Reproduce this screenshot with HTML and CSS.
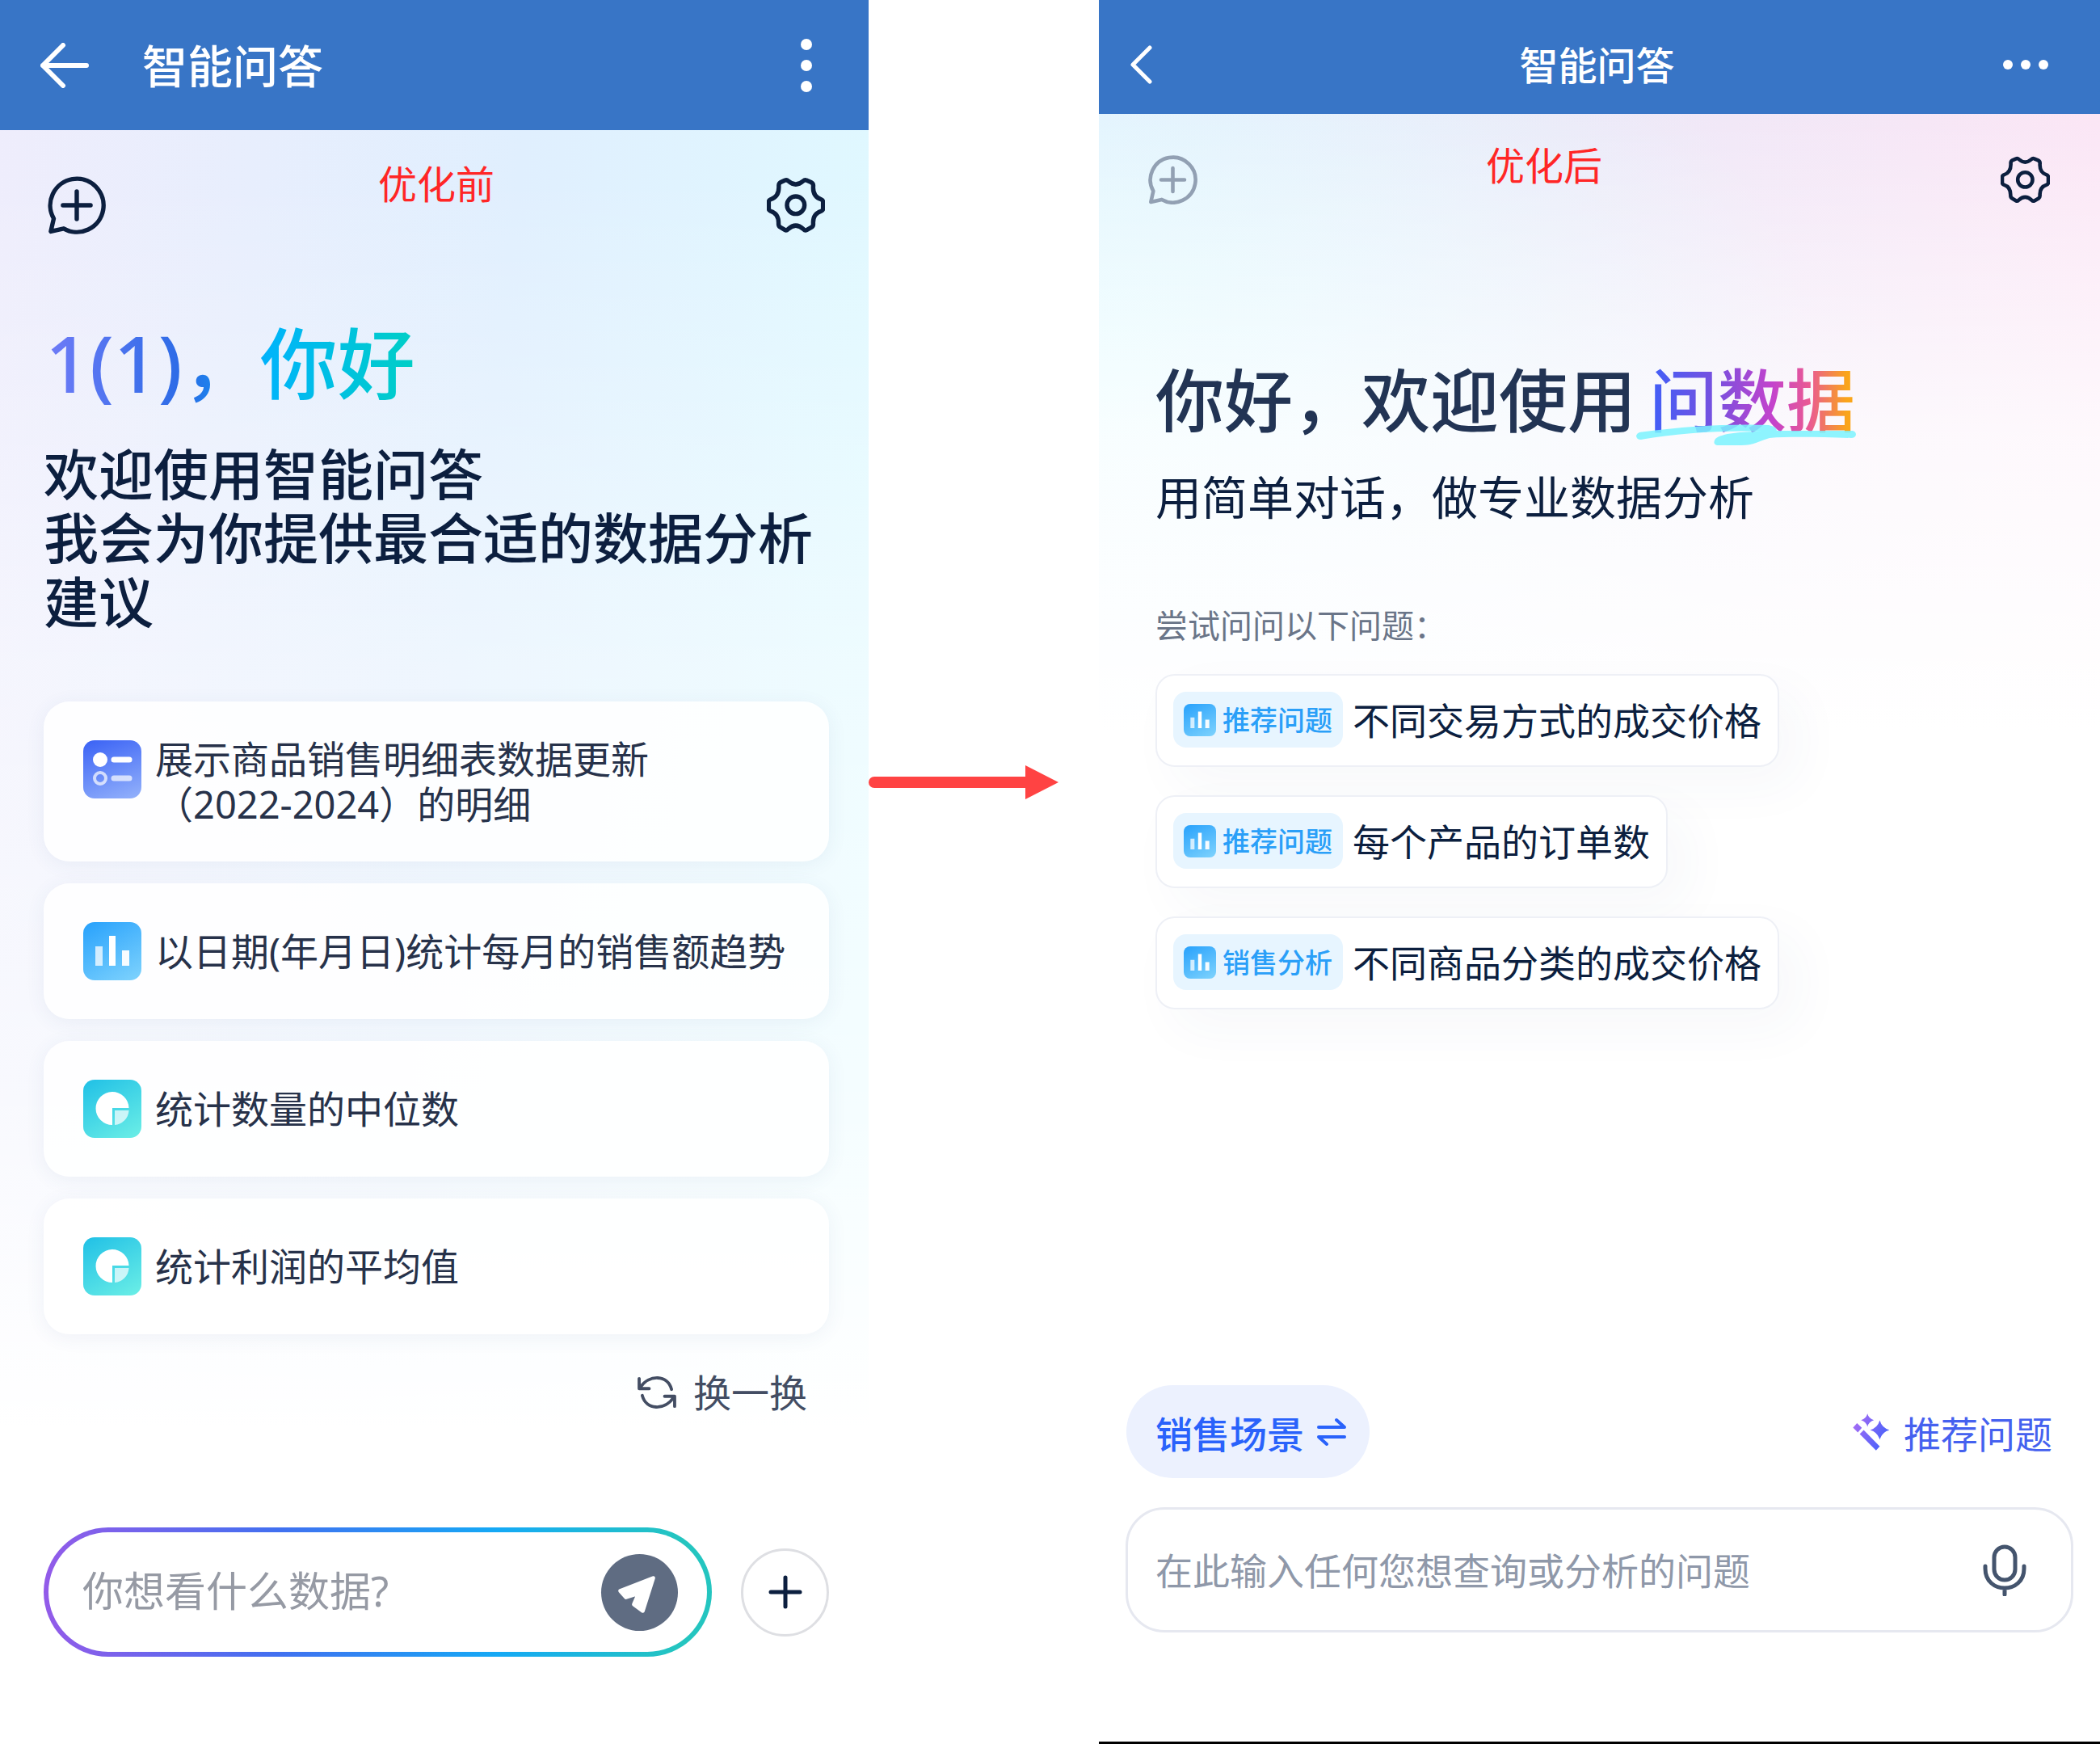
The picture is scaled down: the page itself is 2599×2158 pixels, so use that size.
FILE: index.html
```
<!DOCTYPE html>
<html lang="zh-CN">
<head>
    <meta charset="UTF-8">
    <meta name="viewport" content="width=device-width, initial-scale=1">
    <title>智能问答</title>
    <link rel="stylesheet" href="styles.css">
</head>
<body>
<!-- shared icons -->
<svg class="sprite" aria-hidden="true">
    <symbol id="i-chat" viewBox="0 0 24 24">
        <path d="M1.3 22.8L2.5 17.5A11 11 0 1 1 6.6 21.6Z M12 6.3V17.7M6.3 12H17.7" fill="none" stroke="currentColor" stroke-width="1.8" stroke-linecap="round" stroke-linejoin="round"/>
    </symbol>
    <symbol id="i-gear" viewBox="30 39 213 213">
        <g fill="none" stroke="currentColor" stroke-width="16" stroke-linejoin="round">
            <path d="M74 76Q73 65 81 61L97 54Q103 51 109 57Q136 81 163 57Q169 51 175 54L192 61Q201 65 200 76C198 105 210 118 229 124Q236 127 236 133V158Q236 164 229 167C210 173 198 188 200 214Q200 222 194 226L176 236Q170 239 164 233Q136 207 108 233Q102 239 97 236L80 226Q73 222 73 214C74 188 64 173 44 167Q37 164 37 158V133Q37 127 44 124C64 118 75 105 74 76Z"/>
            <circle cx="136" cy="145" r="32"/>
        </g>
    </symbol>
    <symbol id="i-bars" viewBox="0 0 72 72">
        <path d="M15 30h9v24h-9z" fill="#fff" opacity=".75"/>
        <path d="M32 17h8v37h-8z" fill="#fff"/>
        <path d="M48 35h9v19h-9z" fill="#fff" opacity=".95"/>
    </symbol>
    <symbol id="i-pie" viewBox="0 0 72 72">
        <path d="M36 56A20.500 20.500 0 1 1 56.500 35H36Z" fill="#fff"/>
        <path d="M39 38H56.500A19 19 0 0 1 39 56Z" fill="#fff" opacity=".7"/>
    </symbol>
</svg>

<main class="compare">
    <section class="phone before">
        <header class="bar">
            <button class="icon-btn" aria-label="返回">
                <svg class="back" viewBox="0 0 60 56"><path d="M28 3L3 28L28 53M3 28H57" fill="none" stroke="#fff" stroke-width="6" stroke-linecap="round" stroke-linejoin="round"/></svg>
            </button>
            <h1 class="bar-title">智能问答</h1>
            <button class="icon-btn" aria-label="更多">
                <svg class="more" viewBox="0 0 14 66" fill="#fff"><circle cx="7" cy="7" r="7"/><circle cx="7" cy="33" r="7"/><circle cx="7" cy="59" r="7"/></svg>
            </button>
        </header>
        <div class="tools">
            <button class="icon-btn" aria-label="新建对话"><svg class="tool"><use href="#i-chat"/></svg></button>
            <p class="note">优化前</p>
            <button class="icon-btn" aria-label="设置"><svg class="tool"><use href="#i-gear"/></svg></button>
        </div>
        <h2 class="hello"><span>1(1)，你好</span></h2>
        <p class="intro">欢迎使用智能问答
我会为你提供最合适的数据分析建议</p>
        <div class="cards">
            <button class="card">
                <svg class="card-icon blue" viewBox="0 0 72 72">
                    <circle cx="21" cy="24" r="9" fill="#fff"/>
                    <path d="M38 24H57" stroke="#fff" stroke-width="7" stroke-linecap="round"/>
                    <g opacity=".7" stroke="#fff" fill="none"><circle cx="21" cy="47" r="7" stroke-width="4"/><path d="M38 47H57" stroke-width="7" stroke-linecap="round"/></g>
                </svg>
                <span class="card-text">展示商品销售明细表数据更新
（2022-2024）的明细</span>
            </button>
            <button class="card">
                <svg class="card-icon sky"><use href="#i-bars"/></svg>
                <span class="card-text">以日期(年月日)统计每月的销售额趋势</span>
            </button>
            <button class="card">
                <svg class="card-icon cyan"><use href="#i-pie"/></svg>
                <span class="card-text">统计数量的中位数</span>
            </button>
            <button class="card">
                <svg class="card-icon cyan"><use href="#i-pie"/></svg>
                <span class="card-text">统计利润的平均值</span>
            </button>
        </div>
        <button class="refresh">
            <svg viewBox="0 0 52 44" fill="none" stroke="currentColor" stroke-width="4" stroke-linecap="round" stroke-linejoin="round">
                <path d="M3 4V17H16M4 16C16 -2 40 -1 45 18"/>
                <path d="M49 40V27H36M48 28C36 46 12 45 7 26"/>
            </svg>
            换一换
        </button>
        <form class="ask">
            <div class="ask-box">
                <input type="text" aria-label="你想看什么数据" placeholder="你想看什么数据?">
                <button type="button" class="send" aria-label="发送">
                    <svg viewBox="0 0 96 96"><path d="M65 30L24 46L31 54L47 49L41 63L52 71Z" fill="#fff" stroke="#fff" stroke-width="5" stroke-linejoin="round"/></svg>
                </button>
            </div>
            <button type="button" class="plus" aria-label="添加">
                <svg viewBox="0 0 42 42"><path d="M21 3V39M3 21H39" stroke="#0c1f3f" stroke-width="5" stroke-linecap="round"/></svg>
            </button>
        </form>
    </section>

    <div class="arrow">
        <svg viewBox="0 0 285 42" fill="#ff4343"><path d="M7 14H194V0L235 21L194 42V28H7A7 7 0 0 1 7 14Z"/></svg>
    </div>

    <section class="phone after">
        <header class="bar">
            <button class="icon-btn" aria-label="返回">
                <svg class="back" viewBox="0 0 28 48"><path d="M25 3L4 24L25 45" fill="none" stroke="#fff" stroke-width="5" stroke-linecap="round" stroke-linejoin="round"/></svg>
            </button>
            <h1 class="bar-title">智能问答</h1>
            <button class="icon-btn" aria-label="更多">
                <svg class="more" viewBox="0 0 56 12" fill="#fff"><circle cx="6" cy="6" r="6"/><circle cx="28" cy="6" r="6"/><circle cx="50" cy="6" r="6"/></svg>
            </button>
        </header>
        <div class="tools">
            <button class="icon-btn muted" aria-label="新建对话"><svg class="tool"><use href="#i-chat"/></svg></button>
            <p class="note">优化后</p>
            <button class="icon-btn" aria-label="设置"><svg class="tool"><use href="#i-gear"/></svg></button>
        </div>
        <h2 class="hello">你好，欢迎使用<span class="brand"><span>问数据</span>
            <svg class="swash" viewBox="0 0 272 26" preserveAspectRatio="none" fill="#7cf4ff" opacity=".85"><path d="M4 10C60 2 120 -1 164 1Q174 3 174 8H268Q272 9 272 13Q271 17 266 17C230 16 190 15 165 17C152 21 145 26 130 26H100Q94 24 98 18C106 11 130 9 156 9C110 7 50 11 6 19Q0 19 0 14Q1 11 4 10Z"/></svg></span>
        </h2>
        <p class="intro">用简单对话，做专业数据分析</p>
        <p class="try">尝试问问以下问题：</p>
        <div class="cards">
            <button class="chip">
                <span class="tag"><svg class="tag-icon"><use href="#i-bars"/></svg>推荐问题</span>
                不同交易方式的成交价格
            </button>
            <button class="chip">
                <span class="tag"><svg class="tag-icon"><use href="#i-bars"/></svg>推荐问题</span>
                每个产品的订单数
            </button>
            <button class="chip">
                <span class="tag"><svg class="tag-icon"><use href="#i-bars"/></svg>销售分析</span>
                不同商品分类的成交价格
            </button>
        </div>
        <div class="actions">
            <button class="scene">
                销售场景
                <svg viewBox="0 0 36 36" fill="none" stroke="currentColor" stroke-width="4" stroke-linecap="round" stroke-linejoin="round"><path d="M2 12H34L24 3M34 24H2L12 33"/></svg>
            </button>
            <button class="recommend">
                <svg viewBox="72 55 145 145">
                    <defs>
                        <linearGradient id="g-wand" gradientUnits="userSpaceOnUse" x1="80" y1="90" x2="200" y2="150">
                            <stop offset="0" stop-color="#a56cf5"/>
                            <stop offset="1" stop-color="#4b62fa"/>
                        </linearGradient>
                    </defs>
                    <g fill="url(#g-wand)">
                        <path d="M176 84Q184 112 212 120Q184 128 176 156Q168 128 140 120Q168 112 176 84Z"/>
                        <path d="M130 59Q135 78 154 83Q135 88 130 108Q125 88 106 83Q125 78 130 59Z"/>
                        <path d="M91 94L109 112L94 129L76 111Z"/>
                        <path d="M116 120L176 181L162 196L101 135Z"/>
                    </g>
                </svg>
                推荐问题
            </button>
        </div>
        <form class="query">
            <input type="text" aria-label="问题" placeholder="在此输入任何您想查询或分析的问题">
            <button type="button" class="icon-btn" aria-label="语音输入">
                <svg class="mic" viewBox="0 0 54 64" fill="none" stroke="#44546d" stroke-width="5" stroke-linecap="round"><rect x="14" y="3" width="26" height="41" rx="13"/><path d="M3 27V30C3 62 51 62 51 30V27M27 55V62"/></svg>
            </button>
        </form>
    </section>
</main>
</body>
</html>
```

FILE: styles.css
```
*{ margin: 0; padding: 0; box-sizing: border-box;}
body{
    background: #fff;
    color: #0c1f3f;
    font-family: "Noto Sans", "Noto Sans CJK SC", sans-serif;
}
button, input{
    font: inherit;
    color: inherit;
    border: 0;
    background: none;
}
button{ cursor: pointer;}
svg{ display: block; flex: none;}
.sprite{ position: absolute; width: 0; height: 0;}

.compare{
    display: grid;
    grid-template-columns: 1075fr 285fr 1239fr;
    min-height: 100vh;
}
.phone{
    display: flex;
    flex-direction: column;
    min-width: 0;
}
.bar{
    display: flex;
    align-items: center;
    background: #3875c6;
    color: #fff;
}
.bar-title{
    padding-bottom: 4px;
    font-weight: 500;
}
.tools{
    display: flex;
    justify-content: space-between;
    align-items: flex-end;
}
.note{
    align-self: flex-start;
    font-size: 48px;
    line-height: 48px;
    color: #ff2626;
}
.arrow{
    padding-top: 947px;
}
.arrow svg{ width: 100%;}

/* old version */
.before{
    background:
        linear-gradient(180deg, rgba(255,255,255,0) 10%, rgba(255,255,255,.45) 38%, rgba(255,255,255,.65) 62%, #fff 82%),
        linear-gradient(97deg, #efedfc 0%, #e0effe 50%, #e0faff 90%);
}
.before .bar{
    height: 161px;
    padding: 0 70px 0 50px;
}
.before .back{ width: 60px; height: 56px;}
.before .more{ width: 14px; height: 66px;}
.before .bar-title{
    flex: 1;
    margin-left: 66px;
    font-size: 56px;
}
.before .tools{
    height: 129px;
    padding: 43px 54px 0 59px;
}
.before .tool{ width: 72px; height: 72px;}
.before .hello{
    margin: 103px 56px 0;
    font-size: 96px;
    line-height: 112px;
    font-weight: 500;
}
.before .hello span{
    background: linear-gradient(90deg, #6f7bf7 0%, #2a6be6 38%, #00b4fa 60%, #00cfc6 100%);
    -webkit-background-clip: text;
    background-clip: text;
    color: transparent;
}
.before .intro{
    margin: 42px 54px 0;
    font-size: 68px;
    line-height: 79px;
    font-weight: 500;
    white-space: pre-line;
}
.before .cards{
    display: flex;
    flex-direction: column;
    gap: 27px;
    margin: 84px 49px 0 54px;
}
.card{
    display: flex;
    align-items: flex-start;
    gap: 17px;
    padding: 43px 40px 43px 49px;
    border-radius: 32px;
    background: rgba(255,255,255,.85);
    box-shadow: 0 4px 24px rgba(60,80,140,.07);
    font-size: 47px;
    line-height: 56px;
    color: #27324a;
    text-align: left;
}
.card-text{
    align-self: center;
    white-space: pre-line;
}
.card-icon{
    width: 72px;
    height: 72px;
    margin: 5px 0;
    border-radius: 14px;
}
.blue{ background: linear-gradient(160deg, #3a62f5, #94b2fb);}
.sky, .tag-icon{ background: linear-gradient(150deg, #27a1fc, #7fd3fd);}
.cyan{ background: linear-gradient(150deg, #20c0e6, #6cefe6);}
.refresh{
    display: flex;
    align-items: center;
    align-self: flex-end;
    gap: 20px;
    margin: 44px 76px 0 0;
    font-size: 47px;
    line-height: 56px;
    color: #434d63;
}
.refresh svg{ width: 50px; height: 42px;}
.ask{
    display: flex;
    align-items: center;
    gap: 36px;
    margin-top: auto;
    padding: 0 49px 108px 54px;
}
.ask-box{
    display: flex;
    align-items: center;
    flex: 1;
    min-width: 0;
    height: 160px;
    padding: 0 36px 0 42px;
    border: 6px solid transparent;
    border-radius: 80px;
    background:
        linear-gradient(#fff, #fff) padding-box,
        linear-gradient(90deg, #935be9, #4170f0 35%, #15a9f5 68%, #24c5c0 95%) border-box;
}
.ask input, .query input{
    flex: 1;
    min-width: 0;
    outline: 0;
}
.ask input{
    padding-bottom: 4px;
    font-size: 51px;
    line-height: 64px;
}
.ask input::placeholder{ color: #969aa4;}
.send{
    flex: none;
    width: 95px;
    height: 95px;
    border-radius: 50%;
    background: #5f6c82;
}
.plus{
    display: flex;
    flex: none;
    align-items: center;
    justify-content: center;
    width: 109px;
    height: 109px;
    border: 3px solid #dedfe3;
    border-radius: 50%;
    background: #fff;
}
.plus svg{ width: 42px; height: 42px;}

/* new version */
.after{
    border-bottom: 3px solid #000;
    background:
        linear-gradient(180deg, rgba(255,255,255,0) 6%, rgba(255,255,255,.75) 25%, #fff 42%),
        radial-gradient(900px 600px at 0 480px, #e2fbff, rgba(226,251,255,0)),
        linear-gradient(90deg, #e4effd 0%, #ece8f8 45%, #fbe5f5 100%);
}
.after .bar{
    height: 141px;
    padding: 19px 64px 0 38px;
}
.after .back{ width: 28px; height: 48px;}
.after .more{ width: 56px; height: 12px;}
.after .bar-title{
    flex: 1;
    padding-left: 48px;
    text-align: center;
    font-size: 48px;
}
.after .tools{
    height: 112px;
    padding: 40px 62px 0 61px;
}
.after .note{ margin: 0 auto 0 32%;}
.after .tool{ width: 61px; height: 61px;}
.muted{ color: #92a0b3;}
.after .hello{
    display: flex;
    gap: 16px;
    margin: 186px 70px 0;
    font-size: 85px;
    line-height: 112px;
    font-weight: 500;
    color: #223454;
}
.brand{ position: relative;}
.brand span{
    background: linear-gradient(90deg, #3f5ff8 0%, #7a50de 33%, #c443cc 60%, #ea5a92 78%, #faa51a 96%);
    -webkit-background-clip: text;
    background-clip: text;
    color: transparent;
}
.swash{
    position: absolute;
    left: -16px;
    bottom: 0;
    width: 272px;
    height: 26px;
}
.after .intro{
    margin: 24px 70px 0;
    font-size: 57px;
    line-height: 80px;
}
.try{
    margin: 91px 70px 0;
    font-size: 40px;
    line-height: 56px;
    color: #6a7588;
}
.after .cards{
    display: flex;
    flex-direction: column;
    align-items: flex-start;
    gap: 35px;
    margin: 32px 70px 0;
}
.chip{
    display: flex;
    align-items: center;
    gap: 12px;
    height: 115px;
    padding: 0 20px 2px;
    border: 2px solid #eef0f6;
    border-radius: 24px;
    background: #fff;
    box-shadow: 24px 24px 64px rgba(60,80,140,.04);
    font-size: 46px;
    line-height: 64px;
    white-space: nowrap;
}
.tag{
    display: flex;
    align-items: center;
    gap: 8px;
    height: 69px;
    padding: 0 13px;
    border-radius: 16px;
    background: #e7f5ff;
    font-size: 34px;
    font-weight: 500;
    color: #2a9ff8;
}
.tag-icon{
    width: 40px;
    height: 40px;
    border-radius: 8px;
}
.actions{
    display: flex;
    justify-content: space-between;
    margin: auto 59px 36px 34px;
}
.scene, .recommend{
    display: flex;
    align-items: center;
    gap: 16px;
    font-size: 46px;
}
.scene{
    height: 115px;
    padding: 0 29px 0 36px;
    border-radius: 58px;
    background: #ecf1fe;
    font-weight: 500;
    color: #2962fb;
}
.scene svg{ width: 36px; height: 36px;}
.recommend{ color: #4561ef;}
.recommend svg{ width: 48px; height: 48px;}
.query{
    display: flex;
    align-items: center;
    height: 155px;
    margin: 0 33px 135px;
    padding: 0 55px 0 34px;
    border: 3px solid #e6e8f0;
    border-radius: 48px;
    background: #fff;
}
.query input{ font-size: 46px; line-height: 64px;}
.query input::placeholder{ color: #8f98a9;}
.mic{ width: 54px; height: 64px;}
```
